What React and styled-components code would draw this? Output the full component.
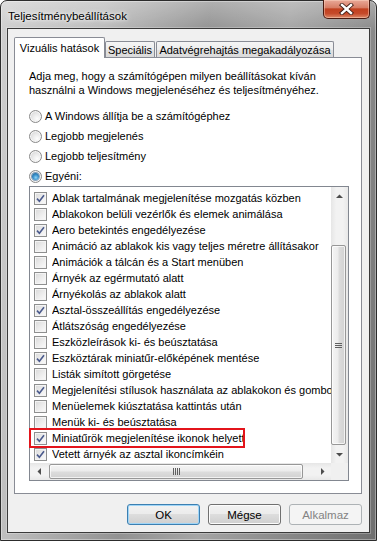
import React from 'react';
import styled, { createGlobalStyle } from 'styled-components';

const GlobalStyle = createGlobalStyle`
  html, body {
    margin: 0;
    padding: 0;
    background: #fff;
  }
  body {
    font-family: "Liberation Sans", Arial, sans-serif;
    font-size: 11px;
    color: #000;
  }
`;

const Window = styled.div`
  width: 377px;
  height: 541px;
  box-sizing: border-box;
  display: flex;
  flex-direction: column;
  padding: 0 6px 7px 6px;
  border: 1px solid #2c2c2c;
  border-radius: 7px 7px 0 0;
  background:
    linear-gradient(to bottom, rgba(255,255,255,0.28), rgba(255,255,255,0) 30px),
    linear-gradient(100deg, #cfcfcf 0%, #bcbcbc 22%, #929292 45%, #a5a5a5 62%, #878787 82%, #6f6f6f 100%);
  box-shadow: inset 0 0 0 1px rgba(255,255,255,0.35);
`;

const TitleBar = styled.div`
  height: 27px;
  display: flex;
  justify-content: space-between;
  align-items: flex-start;
`;

const Title = styled.div`
  margin: 8px 0 0 1px;
  line-height: 14px;
  font-size: 11.5px;
  text-shadow: 0 0 6px rgba(255,255,255,0.95), 0 0 3px rgba(255,255,255,0.9);
`;

const CloseButton = styled.div`
  width: 47px;
  height: 19px;
  margin-top: -1px;
  box-sizing: border-box;
  border: 1px solid #4a1a10;
  border-top: none;
  border-radius: 0 0 5px 5px;
  display: flex;
  align-items: center;
  justify-content: center;
  background: linear-gradient(#e9a998 0%, #d77e66 42%, #c1401f 50%, #c64a2a 75%, #dc8868 100%);
  box-shadow: inset 0 0 0 1px rgba(255,220,200,0.45);
`;

const Client = styled.div`
  flex: 1;
  display: flex;
  flex-direction: column;
  padding: 8px 7px 7px 6px;
  border: 1px solid #3a3a3a;
  background: #f0f0f0;
  box-shadow: 0 0 0 1px rgba(255,255,255,0.25);
`;

const TabStrip = styled.div`
  height: 20px;
  display: flex;
  align-items: flex-end;
`;

const Tab = styled.div`
  position: relative;
  box-sizing: border-box;
  width: ${p => p.$w}px;
  height: ${p => (p.$active ? 21 : 16)}px;
  margin-bottom: ${p => (p.$active ? -1 : 0)}px;
  margin-right: ${p => (p.$active ? 0 : 1)}px;
  z-index: ${p => (p.$active ? 1 : 0)};
  border: 1px solid #898c95;
  border-bottom: none;
  border-radius: 2px 2px 0 0;
  display: flex;
  align-items: center;
  justify-content: center;
  padding-bottom: ${p => (p.$active ? 1 : 0)}px;
  background: ${p => (p.$active
    ? '#fff'
    : 'linear-gradient(#f5f5f5, #ededed 50%, #e2e2e2 50%, #dadada)')};
  white-space: nowrap;
`;

const Panel = styled.div`
  flex: 1;
  display: flex;
  flex-direction: column;
  padding: 11px 12px 0 14px;
  border: 1px solid #898c95;
  background: #fff;
`;

const Description = styled.p`
  margin: 0;
  line-height: 14px;
`;

const RadioGroup = styled.div`
  margin-top: 9px;
  display: flex;
  flex-direction: column;
`;

const RadioRow = styled.div`
  height: 20px;
  display: flex;
  align-items: center;
`;

const RadioCircle = styled.span`
  width: 13px;
  height: 13px;
  box-sizing: border-box;
  margin-right: 3px;
  border-radius: 50%;
  border: 1px solid #8a8a8a;
  background: radial-gradient(circle at 65% 70%, #fdfdfd 0%, #e9e9e9 45%, #cfcfcf 100%);
  box-shadow: inset 0 0 0 1px #f6f6f6;
  display: flex;
  align-items: center;
  justify-content: center;
  &::after {
    content: '';
    display: ${p => (p.$checked ? 'block' : 'none')};
    width: 7px;
    height: 7px;
    border-radius: 50%;
    background: radial-gradient(circle at 55% 65%, #8ed6f8 0%, #3a8fca 45%, #135a8c 100%);
    box-shadow: 0 0 0 1px rgba(40,90,140,0.5);
  }
`;

const ListBox = styled.div`
  margin-top: 0;
  width: 320px;
  height: 295px;
  box-sizing: border-box;
  border: 1px solid #828790;
  display: grid;
  grid-template-columns: 301px 17px;
  grid-template-rows: 276px 17px;
  background: #fff;
`;

const Items = styled.div`
  padding-top: 3px;
  min-width: 0;
`;

const ItemRow = styled.div`
  position: relative;
  height: 16px;
  display: flex;
  align-items: center;
  padding-left: 4px;
  &::after {
    content: '';
    display: ${p => (p.$marked ? 'block' : 'none')};
    position: absolute;
    left: -1px;
    top: -2px;
    width: 216px;
    height: 20px;
    box-sizing: border-box;
    border: 2px solid #e3141b;
  }
`;

const CheckBox = styled.span`
  flex: none;
  width: 13px;
  height: 13px;
  box-sizing: border-box;
  margin-right: 5px;
  border: 1px solid #8e8f8f;
  background: linear-gradient(135deg, #d9d9d9 0%, #ededed 55%, #fbfbfb 100%);
  box-shadow: inset 0 0 0 1px #f4f4f4;
  display: flex;
  align-items: center;
  justify-content: center;
`;

const ItemLabel = styled.span`
  flex: 1;
  min-width: 0;
  overflow: hidden;
  white-space: nowrap;
  line-height: 16px;
`;

const VScroll = styled.div`
  display: flex;
  flex-direction: column;
  background: linear-gradient(90deg, #e6e6e6, #f2f2f2 30%, #f2f2f2 70%, #e8e8e8);
`;

const HScroll = styled.div`
  display: flex;
  background: linear-gradient(#e6e6e6, #f2f2f2 30%, #f2f2f2 70%, #e8e8e8);
`;

const Corner = styled.div`
  background: #f0f0f0;
`;

const ArrowButton = styled.div`
  flex: none;
  width: 17px;
  height: 17px;
  display: flex;
  align-items: center;
  justify-content: center;
`;

const Track = styled.div`
  flex: 1;
  display: flex;
  flex-direction: ${p => (p.$vertical ? 'column' : 'row')};
`;

const Thumb = styled.div`
  box-sizing: border-box;
  border: 1px solid #979797;
  border-radius: 2px;
  display: flex;
  align-items: center;
  justify-content: center;
  ${p => (p.$vertical
    ? `width: 15px; height: ${p.$size}px; margin: ${p.$offset}px 0 0 0;
       background: linear-gradient(90deg, #f4f4f4, #ececec 45%, #dcdcdc 55%, #d2d2d2);`
    : `height: 15px; width: ${p.$size}px; margin: 1px 0 0 ${p.$offset}px;
       background: linear-gradient(#f4f4f4, #ececec 45%, #dcdcdc 55%, #d2d2d2);`)}
  box-shadow: inset 0 0 0 1px rgba(255,255,255,0.7);
`;

const Gripper = styled.span`
  display: flex;
  flex-direction: ${p => (p.$vertical ? 'column' : 'row')};
  gap: 1px;
  & > i {
    display: block;
    background: #5f5f5f;
    ${p => (p.$vertical ? 'width: 7px; height: 1px;' : 'width: 1px; height: 7px;')}
  }
`;

const ButtonRow = styled.div`
  margin-top: 10px;
  display: flex;
  justify-content: flex-end;
  gap: 8px;
`;

const Button = styled.div`
  width: 73px;
  height: 21px;
  box-sizing: border-box;
  border-radius: 3px;
  display: flex;
  align-items: center;
  justify-content: center;
  font-size: 11.5px;
  border: 1px solid ${p => (p.$default ? '#3c7fb1' : p.$disabled ? '#adb2b5' : '#707070')};
  color: ${p => (p.$disabled ? '#838383' : '#000')};
  background: ${p => (p.$disabled
    ? '#f4f4f4'
    : 'linear-gradient(#f2f2f2 0%, #ebebeb 50%, #dddddd 50%, #cfcfcf 100%)')};
  box-shadow: ${p => (p.$default
    ? 'inset 0 0 0 1px #9fd5f7'
    : p.$disabled ? 'none' : 'inset 0 0 0 1px #fcfcfc')};
`;

const items = [
  ['Ablak tartalmának megjelenítése mozgatás közben', true],
  ['Ablakokon belüli vezérlők és elemek animálása', false],
  ['Aero betekintés engedélyezése', true],
  ['Animáció az ablakok kis vagy teljes méretre állításakor', false],
  ['Animációk a tálcán és a Start menüben', false],
  ['Árnyék az egérmutató alatt', false],
  ['Árnyékolás az ablakok alatt', false],
  ['Asztal-összeállítás engedélyezése', true],
  ['Átlátszóság engedélyezése', false],
  ['Eszközleírások ki- és beúsztatása', false],
  ['Eszköztárak miniatűr-előképének mentése', true],
  ['Listák simított görgetése', false],
  ['Megjelenítési stílusok használata az ablakokon és gombokon', true],
  ['Menüelemek kiúsztatása kattintás után', false],
  ['Menük ki- és beúsztatása', false],
  ['Miniatűrök megjelenítése ikonok helyett', true, true],
  ['Vetett árnyék az asztal ikoncímkéin', true],
];

const radios = [
  ['A Windows állítja be a számítógéphez', false],
  ['Legjobb megjelenés', false],
  ['Legjobb teljesítmény', false],
  ['Egyéni:', true],
];

const CheckMark = () => (
  <svg width="9" height="9" viewBox="0 0 9 9">
    <path d="M1 4.6 L3.4 7.2 L8 1.2" fill="none" stroke="#4a5a8c" strokeWidth="1.6" />
  </svg>
);

const Arrow = ({ dir }) => {
  const pts = {
    up: '0,4 3.5,0.5 7,4',
    down: '0,0 3.5,3.5 7,0',
    left: '4,0 0.5,3.5 4,7',
    right: '0,0 3.5,3.5 0,7',
  }[dir];
  const vertical = dir === 'up' || dir === 'down';
  return (
    <svg width={vertical ? 7 : 4} height={vertical ? 4 : 7} viewBox={vertical ? '0 0 7 4' : '0 0 4 7'}>
      <polygon points={pts} fill="#4d4d4d" />
    </svg>
  );
};

const CloseX = () => (
  <svg width="15" height="12" viewBox="0 0 15 12">
    <path d="M3 2 L12 10 M12 2 L3 10" stroke="#3d1a12" strokeWidth="4.2" strokeLinecap="square" />
    <path d="M3 2 L12 10 M12 2 L3 10" stroke="#fff" strokeWidth="2.4" strokeLinecap="square" />
  </svg>
);

const Grip = ({ vertical }) => (
  <Gripper $vertical={vertical}>
    <i /><i /><i />
    {!vertical && <i />}
  </Gripper>
);

export default function App() {
  return (
    <>
      <GlobalStyle />
      <Window>
        <TitleBar>
          <Title>Teljesítménybeállítások</Title>
          <CloseButton><CloseX /></CloseButton>
        </TitleBar>
        <Client>
          <TabStrip>
            <Tab $active $w={91}>Vizuális hatások</Tab>
            <Tab $w={50}>Speciális</Tab>
            <Tab $w={178}>Adatvégrehajtás megakadályozása</Tab>
          </TabStrip>
          <Panel>
            <Description>
              Adja meg, hogy a számítógépen milyen beállításokat kíván<br />
              használni a Windows megjelenéséhez és teljesítményéhez.
            </Description>
            <RadioGroup>
              {radios.map(([label, checked]) => (
                <RadioRow key={label}>
                  <RadioCircle $checked={checked} />
                  {label}
                </RadioRow>
              ))}
            </RadioGroup>
            <ListBox>
              <Items>
                {items.map(([label, checked, marked]) => (
                  <ItemRow key={label} $marked={marked}>
                    <CheckBox>{checked && <CheckMark />}</CheckBox>
                    <ItemLabel>{label}</ItemLabel>
                  </ItemRow>
                ))}
              </Items>
              <VScroll>
                <ArrowButton><Arrow dir="up" /></ArrowButton>
                <Track $vertical>
                  <Thumb $vertical $size={200} $offset={41}><Grip vertical /></Thumb>
                </Track>
                <ArrowButton><Arrow dir="down" /></ArrowButton>
              </VScroll>
              <HScroll>
                <ArrowButton><Arrow dir="left" /></ArrowButton>
                <Track>
                  <Thumb $size={254} $offset={2}><Grip /></Thumb>
                </Track>
                <ArrowButton><Arrow dir="right" /></ArrowButton>
              </HScroll>
              <Corner />
            </ListBox>
          </Panel>
          <ButtonRow>
            <Button $default>OK</Button>
            <Button>Mégse</Button>
            <Button $disabled>Alkalmaz</Button>
          </ButtonRow>
        </Client>
      </Window>
    </>
  );
}
